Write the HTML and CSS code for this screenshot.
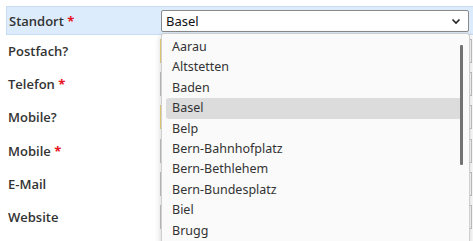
FILE: index.html
```html
<!DOCTYPE html>
<html lang="de">
<head>
<meta charset="utf-8">
<link rel="stylesheet" href="styles.css">
</head>
<body>
<form class="form">
  <div class="row row-active">
    <label class="label">Standort <span class="req">*</span></label>
    <div class="field">
      <div class="select">
        <span>Basel</span>
        <svg class="chev" width="10" height="7" viewBox="0 0 10 7"><path d="M1.5 1.5 L5 5 L8.5 1.5" fill="none" stroke="#222" stroke-width="1.6"/></svg>
      </div>
      <ul class="menu">
        <li>Aarau</li>
        <li>Altstetten</li>
        <li>Baden</li>
        <li class="sel">Basel</li>
        <li>Belp</li>
        <li>Bern-Bahnhofplatz</li>
        <li>Bern-Bethlehem</li>
        <li>Bern-Bundesplatz</li>
        <li>Biel</li>
        <li>Brugg</li>
      </ul>
      <div class="scroll"></div>
    </div>
  </div>
  <div class="row"><label class="label">Postfach?</label><div class="field"><div class="input mark"></div></div></div>
  <div class="row"><label class="label">Telefon <span class="req">*</span></label><div class="field"><div class="input"></div></div></div>
  <div class="row"><label class="label">Mobile?</label><div class="field"><div class="input mark"></div></div></div>
  <div class="row"><label class="label">Mobile <span class="req">*</span></label><div class="field"><div class="input"></div></div></div>
  <div class="row"><label class="label">E-Mail</label><div class="field"><div class="input"></div></div></div>
  <div class="row"><label class="label">Website</label><div class="field"><div class="input"></div></div></div>
</form>
</body>
</html>
```
FILE: styles.css
```css
html { overflow: hidden; background: #fff; }
body { margin: 0; padding: 0; height: 241px; overflow: hidden; font-family: "Open Sans", "Noto Sans", sans-serif; color: #333; }
.form { padding: 6px 0 0 6px; height: 241px; box-sizing: border-box; display: flex; flex-direction: column; }
.row { display: flex; align-items: center; height: 33.3px; flex: none; }
.row-active {
  height: 27px;
  background: #ddecfc;
  border: 1px solid #c8ddf3;
  border-right: none;
  margin-bottom: -1px;
}
.label {
  width: 152px;
  padding-left: 2px;
  font-size: 13px;
  font-weight: 600;
  color: #333;
  flex: none;
}
.req { color: #e8101c; font-weight: 700; }
.field { position: relative; flex: 1; height: 100%; display: flex; align-items: center; }
.select {
  box-sizing: border-box;
  width: 308px;
  height: 22px;
  margin-top: 1px;
  background: #fff;
  border: 1px solid #8a8a8a;
  border-radius: 2px;
  display: flex;
  align-items: center;
  justify-content: space-between;
  padding: 0 7px 0 4px;
  font-family: "Noto Sans", "Open Sans", sans-serif;
  font-size: 13px;
  color: #111;
}
.input {
  box-sizing: border-box;
  width: 312px;
  height: 24px;
  border: 1px solid #c4c4c4;
  background: #fff;
}
.input.mark { border-left: 2px solid #f0d77a; }
.menu {
  position: absolute;
  left: 0;
  top: 26px;
  z-index: 5;
  box-sizing: border-box;
  width: 309px;
  height: 215px;
  margin: 0;
  padding: 3px 7px 0 4px;
  list-style: none;
  overflow: hidden;
  background: #fafafa;
  border: 1px solid #cfcfcf;
  border-bottom: none;
  border-radius: 3px 3px 0 0;
  box-shadow: 0 2px 6px rgba(0,0,0,0.2);
  font-family: "Noto Sans", "Open Sans", sans-serif;
  font-size: 12.5px;
  color: #333;
}
.menu li {
  height: 20.4px;
  line-height: 20.4px;
  padding-left: 6px;
  border-radius: 3px;
}
.menu li.sel { background: #dcdcdc; }
.scroll {
  position: absolute;
  z-index: 6;
  left: 299px;
  top: 38px;
  width: 3px;
  height: 120px;
  background: #737373;
  border-radius: 1px;
}
```
